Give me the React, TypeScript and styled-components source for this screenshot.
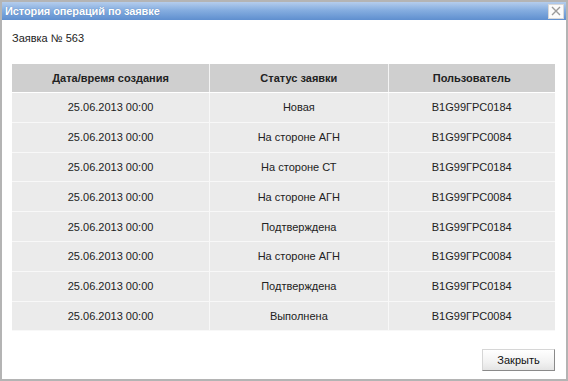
import styled, { createGlobalStyle } from 'styled-components';

const GlobalStyle = createGlobalStyle`
  html, body {
    margin: 0;
    padding: 0;
    background: #ffffff;
  }
  body {
    font-family: 'Liberation Sans', Arial, sans-serif;
  }
`;

const rows = [
    { date: '25.06.2013 00:00', status: 'Новая', user: 'B1G99ГPC0184' },
    { date: '25.06.2013 00:00', status: 'На стороне АГН', user: 'B1G99ГPC0084' },
    { date: '25.06.2013 00:00', status: 'На стороне СТ', user: 'B1G99ГPC0184' },
    { date: '25.06.2013 00:00', status: 'На стороне АГН', user: 'B1G99ГPC0084' },
    { date: '25.06.2013 00:00', status: 'Подтверждена', user: 'B1G99ГPC0184' },
    { date: '25.06.2013 00:00', status: 'На стороне АГН', user: 'B1G99ГPC0084' },
    { date: '25.06.2013 00:00', status: 'Подтверждена', user: 'B1G99ГPC0184' },
    { date: '25.06.2013 00:00', status: 'Выполнена', user: 'B1G99ГPC0084' },
];

const Window = styled.div`
  box-sizing: border-box;
  width: 568px;
  height: 381px;
  border: 2px solid #b4b4b4;
  display: flex;
  flex-direction: column;
  background: #fff;
`;

const TitleBar = styled.div`
  height: 18px;
  display: flex;
  align-items: center;
  justify-content: space-between;
  padding: 0 2px 0 3px;
  background: linear-gradient(to bottom, #b5cdec 0%, #86aee0 45%, #5f8fcf 100%);
`;

const Title = styled.span`
  color: #fff;
  font-size: 11px;
  font-weight: bold;
  letter-spacing: -0.1px;
  text-shadow: 0 0 1px #4d78b0;
`;

const CloseButton = styled.div`
  box-sizing: border-box;
  width: 16px;
  height: 15px;
  background: #fbfbfb;
  border: 1px solid #d8d8d8;
  display: flex;
  align-items: center;
  justify-content: center;
`;

const Body = styled.div`
  flex: 1;
  display: flex;
  flex-direction: column;
  padding: 10px 11px 0 10px;
`;

const Caption = styled.div`
  font-size: 11px;
  color: #222;
  height: 16px;
  line-height: 16px;
  margin-bottom: 18px;
`;

const Table = styled.table`
  width: 543px;
  border-collapse: collapse;
  font-size: 11px;
  color: #222;
`;

const HeadCell = styled.th<{ $w: number }>`
  width: ${p => p.$w}px;
  height: 28px;
  padding: 0;
  background: #cfcfcf;
  font-weight: bold;
  border-left: 1px solid #f4f4f4;
  border-bottom: 1px solid #fff;
  &:first-child { border-left: none; }
`;

const Cell = styled.td`
  height: 28.8px;
  padding: 0;
  text-align: center;
  background: #ebebeb;
  border-left: 1px solid #f8f8f8;
  border-bottom: 1px solid #f8f8f8;
  &:first-child { border-left: none; }
`;

const Footer = styled.div`
  display: flex;
  justify-content: flex-end;
  padding-top: 18px;
`;

const Button = styled.button`
  box-sizing: border-box;
  width: 73px;
  height: 22px;
  font-family: 'Liberation Sans', Arial, sans-serif;
  font-size: 11px;
  color: #111;
  background: linear-gradient(to bottom, #ffffff 0%, #f2f2f2 60%, #e4e4e4 100%);
  border: 1px solid #d6d6d6;
  border-right-color: #8a8a8a;
  border-bottom-color: #8a8a8a;
  padding: 0;
`;

export default function App() {
    return (
        <>
            <GlobalStyle />
            <Window>
                <TitleBar>
                    <Title>История операций по заявке</Title>
                    <CloseButton>
                        <svg width="10" height="10" viewBox="0 0 10 10">
                            <path d="M1 1 L9 9 M9 1 L1 9" stroke="#9a9a9a" strokeWidth="1.4" />
                        </svg>
                    </CloseButton>
                </TitleBar>
                <Body>
                    <Caption>Заявка № 563</Caption>
                    <Table>
                        <thead>
                            <tr>
                                <HeadCell $w={198}>Дата/время создания</HeadCell>
                                <HeadCell $w={178}>Статус заявки</HeadCell>
                                <HeadCell $w={167}>Пользователь</HeadCell>
                            </tr>
                        </thead>
                        <tbody>
                            {rows.map((r, i) => (
                                <tr key={i}>
                                    <Cell>{r.date}</Cell>
                                    <Cell>{r.status}</Cell>
                                    <Cell>{r.user}</Cell>
                                </tr>
                            ))}
                        </tbody>
                    </Table>
                    <Footer>
                        <Button>Закрыть</Button>
                    </Footer>
                </Body>
            </Window>
        </>
    );
}
